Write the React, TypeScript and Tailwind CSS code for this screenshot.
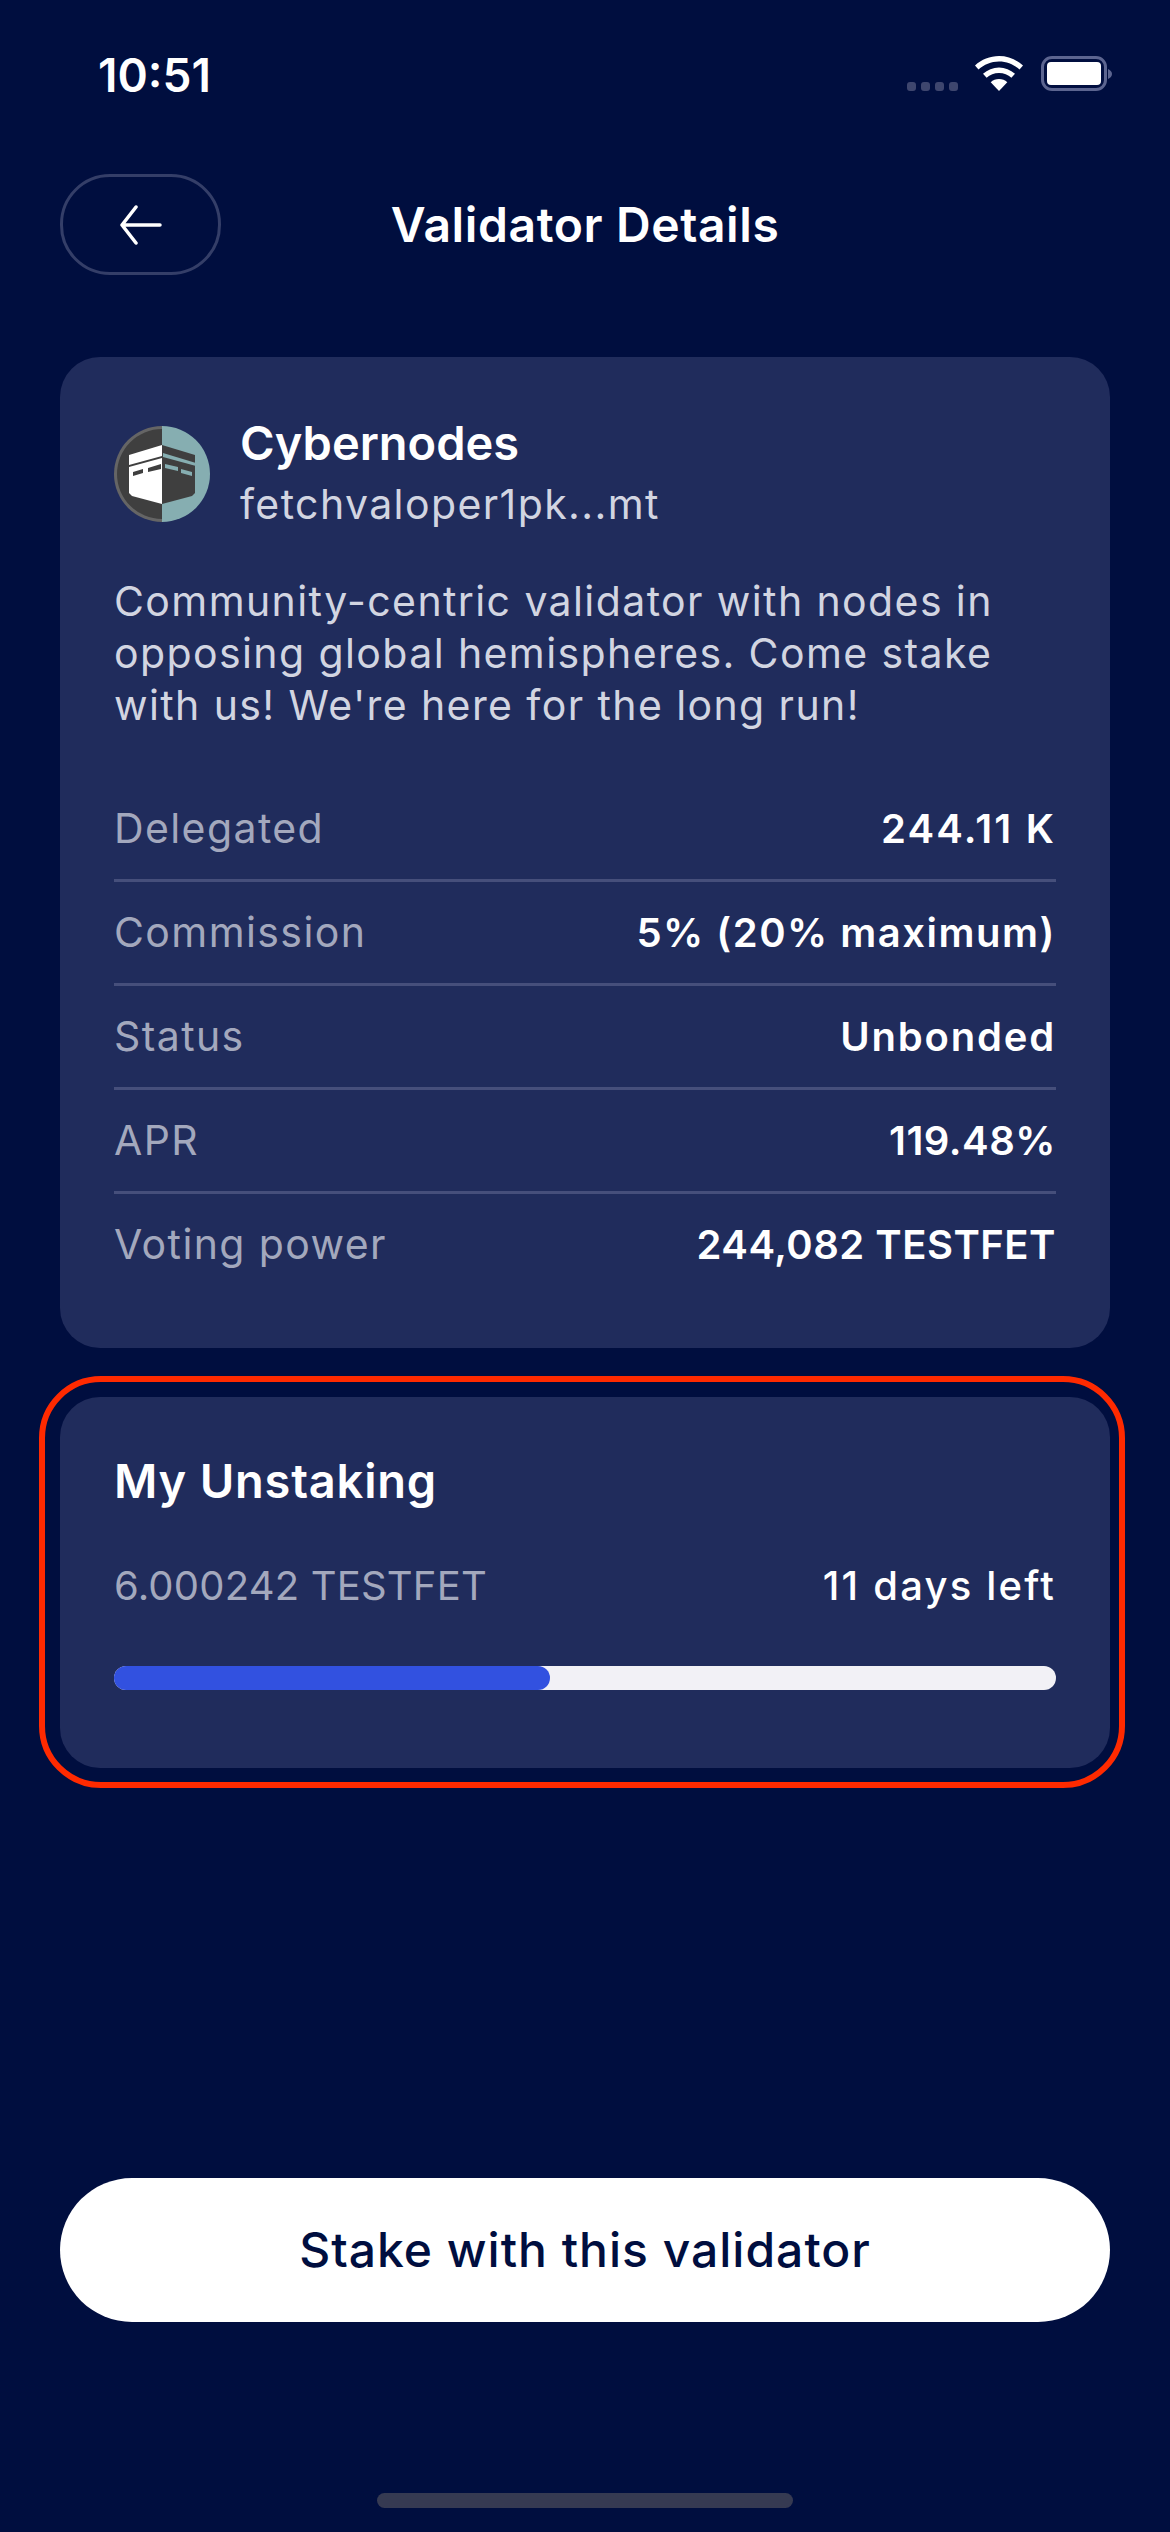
function Logo() {
  return (
    <svg width="96" height="96" viewBox="0 0 96 96" className="shrink-0">
      <path d="M48 0a48 48 0 0 0 0 96z" fill="#656565" />
      <path d="M48 3a45 45 0 0 0 0 90z" fill="#3f3f3f" />
      <path d="M48 0a48 48 0 0 1 0 96z" fill="#86aeb1" />
      <path d="M15 29 48 19v59l-30-8-3-3z" fill="#fff" />
      <path d="M48 19l33 10v38l-3 3-30 8z" fill="#3f3f3f" />
      <path d="M49 27l33 10v3L49 31z" fill="#86aeb1" />
      <path d="M15 39l33-9v2L15 41z" fill="#3f3f3f" />
      <path d="M19 46l10-3v4l-10 3zM34 42l13-4v5l-13 3z" fill="#3f3f3f" />
      <path d="M51 38l13 3v4l-13-3zM67 43l11 3v4l-11-3z" fill="#86aeb1" />
    </svg>
  );
}

function Row({ label, value, spacing, last }: { label: string; value: string; spacing: string; last?: boolean }) {
  return (
    <div className={`flex h-[104px] items-center justify-between ${last ? "pb-[3px]" : "border-b-[3px] border-[#464f7b]"}`}>
      <span className="text-[41px] tracking-[1.4px] text-[#a3a8bd]">{label}</span>
      <span className={`font-semibold text-white ${spacing}`}>{value}</span>
    </div>
  );
}

export default function App() {
  return (
    <div className="flex h-[2532px] w-[1170px] flex-col bg-[#000e3f] px-[60px] text-[40px] font-['Inter',sans-serif] tracking-[0.2px] text-white">
      <div className="-mx-[60px] flex h-[150px] items-start justify-between pl-[98px] pr-[63px] pt-[50px]">
        <span className="text-[46px] font-semibold leading-[50px] tracking-normal">10:51</span>
        <div className="flex items-end pt-[6px]">
          <div className="mr-[17px] flex gap-[5px]">
            <span className="h-[9px] w-[9px] rounded-[3px] bg-[#3e466e]" />
            <span className="h-[9px] w-[9px] rounded-[3px] bg-[#3e466e]" />
            <span className="h-[9px] w-[9px] rounded-[3px] bg-[#3e466e]" />
            <span className="h-[9px] w-[9px] rounded-[3px] bg-[#3e466e]" />
          </div>
          <svg width="48" height="35" viewBox="0 0 48 35" className="mr-[18px]">
            <path d="M24 0c9 0 17.500 3.500 24 9.500l-3.500 4C39 8.500 32 5.500 24 5.500S9 8.500 3.500 13.500L0 9.500C6.500 3.500 15 0 24 0z" fill="#fff" />
            <path d="M24 11.500c6 0 11.500 2.300 16 6.300l-3.600 4c-3.300-3-7.600-4.800-12.400-4.800s-9 1.800-12.400 4.800l-3.600-4c4.500-4 10-6.300 16-6.300z" fill="#fff" />
            <path d="M24 23c3.200 0 6 1.200 8.300 3.200L24 35l-8.300-8.800C18 24.200 20.800 23 24 23z" fill="#fff" />
          </svg>
          <div className="relative h-[35px] w-[66px] rounded-[11px] border-[3px] border-[#5c6590] p-[3px]">
            <div className="h-full w-full rounded-[4px] bg-white" />
            <svg width="4" height="10" viewBox="0 0 4 10" className="absolute -right-[8px] top-[10px]">
              <path d="M0 0c2.500 1 4 3 4 5s-1.500 4-4 5z" fill="#5c6590" />
            </svg>
          </div>
        </div>
      </div>

      <div className="relative mt-[24px] flex h-[101px] items-center justify-center">
        <button className="absolute left-0 top-0 flex h-[101px] w-[161px] items-center justify-center rounded-[50px] border-[3px] border-[#343e68]">
          <svg width="42" height="40" viewBox="0 0 42 40" fill="none" stroke="#fff" strokeWidth="3.500" strokeLinecap="round" strokeLinejoin="round">
            <path d="M40 20H2M16 2 2 20l14 18" />
          </svg>
        </button>
        <h1 className="text-[48px] font-semibold leading-none tracking-[0.6px]">Validator Details</h1>
      </div>

      <div className="mt-[82px] h-[991px] rounded-[40px] bg-[#202c5c] px-[54px] pt-[61px]">
        <div className="flex h-[112px] items-center gap-[30px]">
          <Logo />
          <div className="flex flex-col">
            <span className="text-[47px] font-semibold leading-[46px] tracking-normal">Cybernodes</span>
            <span className="mt-[13px] text-[41px] leading-[50px] tracking-[1.4px] text-[#d2d5e1]">fetchvaloper1pk...mt</span>
          </div>
        </div>
        <p className="mt-[45px] text-[41px] leading-[52px] tracking-[1.4px] text-[#d2d5e1]">
          Community-centric validator with nodes in opposing global hemispheres. Come stake with us! We're here for the long run!
        </p>
        <div className="mt-[47px]">
          <Row label="Delegated" value="244.11 K" spacing="tracking-[2.2px]" />
          <Row label="Commission" value="5% (20% maximum)" spacing="tracking-[1.5px]" />
          <Row label="Status" value="Unbonded" spacing="tracking-[1.8px]" />
          <Row label="APR" value="119.48%" spacing="tracking-[0.5px]" />
          <Row label="Voting power" value="244,082 TESTFET" spacing="tracking-[0.5px]" last />
        </div>
      </div>

      <div className="-ml-[21px] -mr-[15px] mt-[28px] rounded-[62px] border-[6px] border-[#ff2a00] pb-[14px] pl-[15px] pr-[9px] pt-[15px]">
        <div className="h-[371px] rounded-[40px] bg-[#202c5c] px-[54px] pt-[54px]">
          <div className="text-[47px] font-semibold leading-[60px] tracking-[0.8px]">My Unstaking</div>
          <div className="mt-[50px] flex items-center justify-between leading-[50px]">
            <span className="text-[#a3a8bd]">6.000242 TESTFET</span>
            <span className="font-medium tracking-[2.2px]">11 days left</span>
          </div>
          <div className="mt-[55px] h-[24px] rounded-full bg-[#f2f1f6]">
            <div className="h-full w-[436px] rounded-full bg-[#3251e0]" />
          </div>
        </div>
      </div>

      <button className="mt-[390px] flex h-[144px] items-center justify-center rounded-full bg-white text-[48px] font-medium tracking-[1px] text-[#000e3f]">
        Stake with this validator
      </button>

      <div className="mx-auto mt-[171px] h-[15px] w-[416px] rounded-full bg-[#363a52]" />
    </div>
  );
}
